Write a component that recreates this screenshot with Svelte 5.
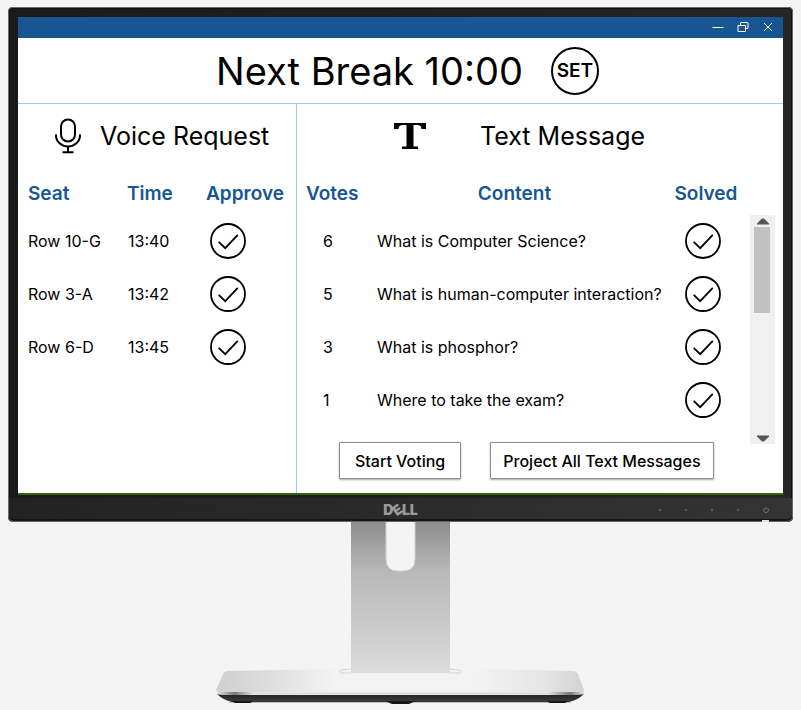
<script>
  const requests = [
    { seat: 'Row 10-G', time: '13:40' },
    { seat: 'Row 3-A', time: '13:42' },
    { seat: 'Row 6-D', time: '13:45' }
  ];
  const messages = [
    { votes: 6, content: 'What is Computer Science?' },
    { votes: 5, content: 'What is human-computer interaction?' },
    { votes: 3, content: 'What is phosphor?' },
    { votes: 1, content: 'Where to take the exam?' }
  ];
</script>

{#snippet check(label)}
  <button class="check" type="button" aria-label={label}>
    <svg width="36" height="36" viewBox="0 0 36 36" fill="none" stroke="#000">
      <circle cx="18" cy="18" r="17" stroke-width="1.8" />
      <path d="M9.2 19.3 L15.2 25.2 L27.3 12.4" stroke-width="1.8" stroke-linecap="round" />
    </svg>
  </button>
{/snippet}

<div class="scene">
  <div class="monitor">
    <main class="screen">
      <div class="titlebar">
        <button type="button" aria-label="Minimize">
          <svg width="12" height="12" viewBox="0 0 12 12"><path d="M0.5 5.5H11.5" /></svg>
        </button>
        <button type="button" aria-label="Restore">
          <svg width="12" height="12" viewBox="0 0 12 12"><path d="M1 3.5H8.5V9.5H1ZM3.5 3V1Q3.5 0.5 4 0.5H10.500Q11 0.5 11 1V6.5H9" /></svg>
        </button>
        <button type="button" aria-label="Close">
          <svg width="12" height="12" viewBox="0 0 12 12"><path d="M2 1L10 9M10 1L2 9" /></svg>
        </button>
      </div>

      <header>
        <h1>Next Break 10:00</h1>
        <button class="set" type="button">SET</button>
      </header>

      <div class="panels">
        <section class="voice">
          <h2>
            <svg width="26" height="36" viewBox="0 0 26 36" fill="none" stroke="#000" stroke-width="2" aria-hidden="true">
              <rect x="6" y="1.5" width="14" height="22" rx="7" />
              <path d="M1 16.5V17.5A12 11 0 0 0 25 17.5V16.5M13 28.5V34M7.5 34.2H18.5" />
            </svg>
            Voice Request
          </h2>
          <table>
            <thead>
              <tr><th class="seat">Seat</th><th class="time">Time</th><th>Approve</th></tr>
            </thead>
            <tbody>
              {#each requests as r}
                <tr>
                  <td>{r.seat}</td>
                  <td class="clock">{r.time}</td>
                  <td class="approve">{@render check(`Approve ${r.seat}`)}</td>
                </tr>
              {/each}
            </tbody>
          </table>
        </section>

        <section class="text">
          <h2>
            <svg width="34" height="28" viewBox="0 0 34 28" aria-hidden="true">
              <path d="M1 1H33V7H28.5C28.3 4 27 3 24 3H20.5V24.5H25V27H9V24.5H13.5V3H10C7 3 5.700 4 5.500 7H1Z" />
            </svg>
            Text Message
          </h2>
          <div class="body">
            <div class="list">
              <table>
                <thead>
                  <tr><th class="votes">Votes</th><th class="content">Content</th><th class="solved">Solved</th></tr>
                </thead>
                <tbody>
                  {#each messages as m}
                    <tr>
                      <td class="count">{m.votes}</td>
                      <td class="message">{m.content}</td>
                      <td class="solve">{@render check(`Mark solved: ${m.content}`)}</td>
                    </tr>
                  {/each}
                </tbody>
              </table>
              <div class="actions">
                <button type="button">Start Voting</button>
                <button type="button">Project All Text Messages</button>
              </div>
            </div>
            <div class="scrollbar">
              <button type="button" aria-label="Scroll up">
                <svg width="12" height="7" viewBox="0 0 12 7"><path d="M0 6.500V5.500L5 0.500H7L12 5.500V6.500Z" /></svg>
              </button>
              <div class="track"><div class="thumb"></div></div>
              <button type="button" aria-label="Scroll down">
                <svg width="12" height="7" viewBox="0 0 12 7"><path d="M0 0.500V1.500L5 6.500H7L12 1.500V0.500Z" /></svg>
              </button>
            </div>
          </div>
        </section>
      </div>
    </main>

    <div class="chin">
      <div class="brand"><span>D</span><span class="tilt">E</span><span>LL</span></div>
      <div class="leds">
        <i></i><i></i><i></i><i></i>
        <svg width="6" height="6" viewBox="0 0 6 6" fill="none" stroke="#858585" stroke-width="0.8">
          <path d="M1.500 1.300A2.400 2.400 0 1 0 4.500 1.300M3 0V2.600" />
        </svg>
      </div>
    </div>
    <div class="notch"></div>
  </div>

  <svg class="stand" width="371" height="184" viewBox="0 0 371 184" aria-hidden="true">
    <defs>
      <linearGradient id="neck" x1="0" y1="0" x2="0" y2="1">
        <stop offset="0" stop-color="#8b8b8b" />
        <stop offset="0.1" stop-color="#9a9a9a" />
        <stop offset="0.33" stop-color="#b9b9b9" />
        <stop offset="0.7" stop-color="#cbcbcb" />
        <stop offset="1" stop-color="#dcdcdc" />
      </linearGradient>
      <linearGradient id="plate" x1="0" y1="0" x2="1" y2="0">
        <stop offset="0" stop-color="#d0d0d0" />
        <stop offset="0.12" stop-color="#dadada" />
        <stop offset="0.32" stop-color="#f3f3f3" />
        <stop offset="0.7" stop-color="#f3f3f3" />
        <stop offset="0.9" stop-color="#e4e4e4" />
        <stop offset="1" stop-color="#d2d2d2" />
      </linearGradient>
      <linearGradient id="edge" x1="0" y1="0" x2="1" y2="0">
        <stop offset="0" stop-color="#eeeeee" />
        <stop offset="0.05" stop-color="#777777" />
        <stop offset="0.1" stop-color="#e2e2e2" />
        <stop offset="0.9" stop-color="#e2e2e2" />
        <stop offset="0.96" stop-color="#777777" />
        <stop offset="1" stop-color="#eeeeee" />
      </linearGradient>
      <linearGradient id="under" x1="0" y1="0" x2="0" y2="1">
        <stop offset="0" stop-color="#222222" />
        <stop offset="1" stop-color="#3c3c3c" />
      </linearGradient>
    </defs>
    <path d="M12 149Q100 147 185 147T358 149Q361 149 363 152L369 168Q369 171 364 171H7Q1 171 1 168L8 152Q10 149 12 149Z" fill="url(#plate)" />
    <path d="M136 151H127Q122 149 127 148L136 147M235 151H244Q249 149 244 148L235 147" fill="none" stroke="#d4d4d4" />
    <path d="M136 0H171V37Q171 49 183 49H188Q200 49 200 37V0H235V151H136Z" fill="url(#neck)" />
    <path d="M171 0V37Q171 49 183 49H188Q200 49 200 37V0" fill="none" stroke="#d0d0d0" />
    <path d="M1 168Q2 170 7 170H363Q368 170 370 168L369 172Q366 174 358 174H12Q4 174 2 172Z" fill="url(#edge)" />
    <path d="M2 172Q5 173 12 173H358Q366 173 369 172Q363 178 354 180H17Q8 178 2 172Z" fill="url(#under)" />
    <path d="M14 180H356V181H14Z" fill="#bcbcbc" />
    <path d="M16 179H39L35 181H20ZM170 179H201L194 182H177ZM331 179H354L350 181H335Z" fill="#181818" />
  </svg>
</div>

<style>
  :global(body) {
    margin: 0;
    background: #f4f4f4;
  }
  .scene {
    padding: 7px 8px 4px;
    font-family: Inter, 'Liberation Sans', sans-serif;
    color: #000;
  }
  button {
    font: inherit;
    color: inherit;
    margin: 0;
    padding: 0;
    border: 0;
    background: none;
    cursor: pointer;
  }
  svg {
    display: block;
    flex: none;
  }
  .monitor {
    position: relative;
    padding: 10px 10px 0;
    border-radius: 5px;
    background: linear-gradient(90deg, #1b1b1b, #202020 60%, #262626);
    box-shadow: inset 0 0 0 1px #6a6a6a, inset 0 0 0 2px #111;
  }
  .screen {
    background: #fff;
    border-bottom: 2px solid #356600;
  }
  .titlebar {
    display: flex;
    justify-content: flex-end;
    align-items: center;
    gap: 13px;
    height: 21px;
    padding-right: 9px;
    background: #185691;
  }
  .titlebar path {
    fill: none;
    stroke: #fff;
  }
  header {
    display: flex;
    justify-content: center;
    align-items: center;
    gap: 28px;
    height: 65px;
    padding-left: 14px;
    border-bottom: 1px solid #9ccbed;
  }
  h1,
  h2 {
    margin: 0;
    font-weight: 400;
    white-space: nowrap;
  }
  h1 {
    font-size: 38px;
    line-height: 48px;
  }
  .set {
    width: 48px;
    height: 48px;
    border: 2px solid #000;
    border-radius: 50%;
    font-size: 19px;
    line-height: 24px;
    font-weight: 600;
  }
  .panels {
    display: flex;
    min-height: 389px;
  }
  .voice {
    flex: 278 1 0;
    border-right: 1px solid #9ccbed;
  }
  .text {
    flex: 486 1 0;
  }
  h2 {
    display: flex;
    align-items: center;
    height: 64px;
    font-size: 25px;
    line-height: 32px;
  }
  .voice h2 {
    gap: 19px;
    padding-left: 37px;
  }
  .text h2 {
    gap: 53px;
    padding-left: 96px;
  }
  table {
    width: 100%;
    margin-top: 4px;
    border-collapse: collapse;
    table-layout: fixed;
    font-size: 16px;
    line-height: 20px;
    white-space: nowrap;
  }
  .voice table {
    width: calc(100% - 10px);
    margin-left: 10px;
  }
  th,
  td {
    padding: 0;
    text-align: left;
  }
  th {
    height: 40px;
    padding-top: 2px;
    color: #185691;
    font-size: 19px;
    line-height: 24px;
    font-weight: 600;
  }
  td {
    height: 53px;
  }
  .seat {
    width: 99px;
  }
  .time {
    width: 79px;
  }
  .clock {
    padding-left: 1px;
  }
  .approve {
    padding-left: 4px;
  }
  .check {
    display: block;
  }
  .body {
    display: flex;
    padding: 0 8px 0 9px;
  }
  .list {
    flex: 1;
  }
  .votes {
    width: 61px;
  }
  .solved {
    width: 88px;
  }
  .content,
  .solved {
    text-align: center;
  }
  .count {
    padding-left: 17px;
  }
  .message {
    padding-left: 10px;
  }
  .solve {
    padding-left: 23px;
  }
  .actions {
    display: flex;
    gap: 29px;
    padding: 16px 0 0 33px;
  }
  .actions button {
    height: 37px;
    padding: 0 12px;
    border: 1px solid #8c8c8c;
    border-radius: 1px;
    background: #fff;
    box-shadow: 0 1px 2px rgba(0, 0, 0, 0.35);
    font-size: 16px;
    line-height: 20px;
    font-weight: 500;
    white-space: nowrap;
  }
  .actions button:first-child {
    padding: 0 15px;
  }
  .scrollbar {
    display: flex;
    flex-direction: column;
    align-self: flex-start;
    width: 25px;
    height: 229px;
    margin-top: 47px;
    background: #f0f0f0;
  }
  .scrollbar button {
    display: flex;
    justify-content: center;
    align-items: center;
    height: 12px;
  }
  .scrollbar path {
    fill: #555;
  }
  .track {
    flex: 1;
    padding: 0 5px 0 4px;
  }
  .thumb {
    height: 42%;
    background: #c1c1c1;
  }
  .chin {
    display: grid;
    grid-template-columns: 1fr auto 1fr;
    align-items: center;
    height: 23px;
    margin: 3px -9px 0;
    border-bottom: 1px solid #666;
    border-radius: 0 0 5px 5px;
    background: linear-gradient(90deg, #222, #2b2b2b 50%, #343434);
    box-shadow: inset 0 -2px 0 #151515;
  }
  .brand {
    display: flex;
    grid-column: 2;
    color: #999;
    font-size: 14px;
    line-height: 16px;
    font-weight: 900;
  }
  .tilt {
    transform: rotate(-35deg);
  }
  .leds {
    display: flex;
    justify-content: flex-end;
    align-items: center;
    gap: 24px;
    padding-right: 23px;
  }
  .leds i {
    width: 2px;
    height: 2px;
    background: #5c5c5c;
  }
  .notch {
    position: absolute;
    right: 24px;
    bottom: 0;
    width: 7px;
    height: 2px;
    background: #e4e4e4;
  }
  .stand {
    margin: 0 auto;
  }
</style>
